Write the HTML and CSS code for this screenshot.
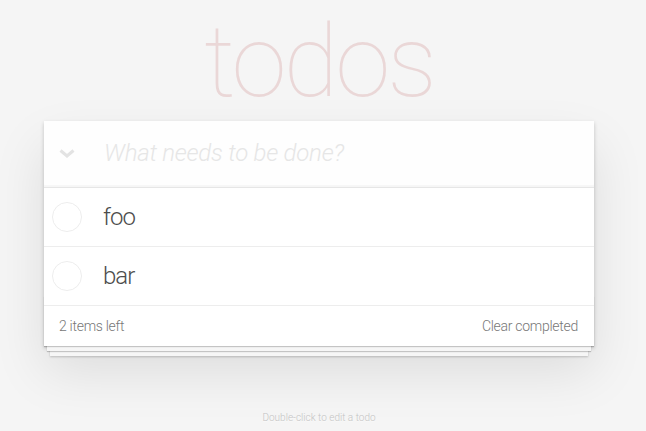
FILE: index.html
```html
<!DOCTYPE html>
<html lang="en">
<head>
<meta charset="utf-8">
<title>todos</title>
<link rel="stylesheet" href="styles.css">
</head>
<body>
<div class="page">
  <h1 class="title">todos</h1>
  <section class="todoapp">
    <header class="new-row">
      <span class="toggle-all">
        <svg width="16" height="9" viewBox="0 0 16 9"><polyline points="1.5,1.5 8,7 14.5,1.5" fill="none" stroke="#e3e3e3" stroke-width="3" stroke-linejoin="miter"/></svg>
      </span>
      <span class="new-todo">What needs to be done?</span>
    </header>
    <ul class="todo-list">
      <li class="todo">
        <svg class="check" width="30" height="30" viewBox="0 0 30 30"><circle cx="15" cy="15" r="14.5" fill="none" stroke="#ededed" stroke-width="1"/></svg>
        <span class="label">foo</span>
      </li>
      <li class="todo">
        <svg class="check" width="30" height="30" viewBox="0 0 30 30"><circle cx="15" cy="15" r="14.5" fill="none" stroke="#ededed" stroke-width="1"/></svg>
        <span class="label">bar</span>
      </li>
    </ul>
    <footer class="footer">
      <span class="count">2 items left</span>
      <span class="clear">Clear completed</span>
    </footer>
  </section>
  <p class="info">Double-click to edit a todo</p>
</div>
</body>
</html>
```
FILE: styles.css
```css
html, body {
  margin: 0;
  padding: 0;
}
body {
  background: #f5f5f5;
  font-family: "Helvetica Neue", Roboto, "Liberation Sans", Arial, sans-serif;
  font-weight: 300;
  font-size: 14px;
  line-height: 1.4em;
  color: #4d4d4d;
  margin-right: 8px;
}
.page {
  width: 550px;
  margin: 0 auto;
}
.title {
  margin: 0;
  padding-top: 12px;
  height: 121px;
  box-sizing: border-box;
  font-size: 100px;
  line-height: 100px;
  font-weight: 100;
  letter-spacing: -3px;
  text-align: center;
  color: rgba(175, 47, 47, 0.15);
}
.todoapp {
  position: relative;
  background: #fff;
  box-shadow: 0 2px 4px 0 rgba(0, 0, 0, 0.2), 0 25px 50px 0 rgba(0, 0, 0, 0.1);
}
.new-row {
  display: flex;
  align-items: center;
  background: rgba(0, 0, 0, 0.003);
  box-shadow: inset 0 -2px 1px rgba(0, 0, 0, 0.03);
}
.toggle-all {
  width: 60px;
  display: flex;
  justify-content: flex-start;
  padding-left: 15px;
  box-sizing: border-box;
}
.toggle-all svg {
  display: block;
}
.new-todo {
  padding: 16px 16px 16px 0;
  font-size: 24px;
  line-height: 1.4em;
  font-style: italic;
  font-weight: 300;
  letter-spacing: -0.01em;
  color: #e6e6e6;
}
.todo-list {
  margin: 0;
  padding: 0;
  list-style: none;
  border-top: 1px solid #e6e6e6;
}
.todo {
  display: flex;
  align-items: center;
  padding-left: 8px;
  border-bottom: 1px solid #ededed;
  font-size: 24px;
}
.check {
  display: block;
  flex: none;
}
.label {
  margin-left: 21px;
  padding: 15px 0;
  line-height: 28px;
  letter-spacing: -0.04em;
  color: #4d4d4d;
}
.footer {
  position: relative;
  display: flex;
  justify-content: space-between;
  padding: 10px 15px;
  height: 20px;
  line-height: 20px;
  color: #777;
  font-size: 14px;
  letter-spacing: -0.02em;
}
.footer::before {
  content: "";
  position: absolute;
  right: 0;
  bottom: 0;
  left: 0;
  height: 50px;
  overflow: hidden;
  box-shadow: 0 1px 1px rgba(0, 0, 0, 0.2),
              0 8px 0 -3px #f6f6f6,
              0 9px 1px -3px rgba(0, 0, 0, 0.2),
              0 16px 0 -6px #f6f6f6,
              0 17px 2px -6px rgba(0, 0, 0, 0.2);
}
.count, .clear {
  position: relative;
}
.clear {
  margin-right: 1px;
}
.info {
  margin: 62px 0 0;
  color: #c4c4c4;
  font-size: 10px;
  text-shadow: 0 1px 0 rgba(255, 255, 255, 0.5);
  text-align: center;
}
```
